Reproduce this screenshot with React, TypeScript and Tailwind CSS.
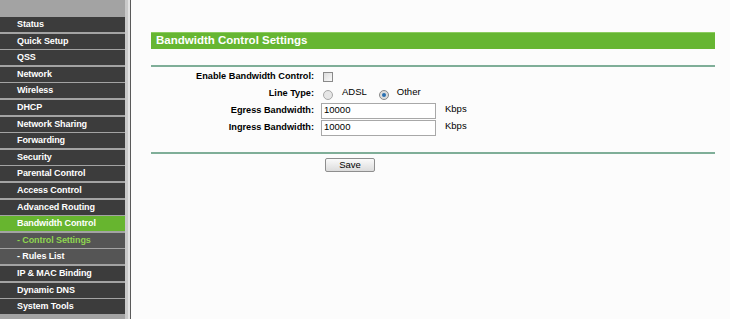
import React from "react";

const items: { label: string; kind?: "active" | "sub" | "subActive" }[] = [
  { label: "Status" },
  { label: "Quick Setup" },
  { label: "QSS" },
  { label: "Network" },
  { label: "Wireless" },
  { label: "DHCP" },
  { label: "Network Sharing" },
  { label: "Forwarding" },
  { label: "Security" },
  { label: "Parental Control" },
  { label: "Access Control" },
  { label: "Advanced Routing" },
  { label: "Bandwidth Control", kind: "active" },
  { label: "- Control Settings", kind: "subActive" },
  { label: "- Rules List", kind: "sub" },
  { label: "IP & MAC Binding" },
  { label: "Dynamic DNS" },
  { label: "System Tools" },
];

function MenuItem({ label, kind }: { label: string; kind?: string }) {
  let cls = "bg-[#3c3c3c] text-white";
  if (kind === "active") cls = "bg-[#67b52f] text-white";
  if (kind === "sub") cls = "bg-[#555555] text-white";
  if (kind === "subActive") cls = "bg-[#555555] text-[#8fd650]";
  return (
    <div className={`h-[15px] flex items-center pl-[17px] font-bold text-[9px] tracking-[-0.1px] leading-none ${cls}`}>
      {label}
    </div>
  );
}

function Row({ label, children }: { label: string; children: React.ReactNode }) {
  return (
    <div className="flex items-center h-[17px]">
      <div className="w-[163px] text-right font-bold text-[9.2px]">{label}</div>
      {children}
    </div>
  );
}

export default function App() {
  return (
    <div
      className="w-[730px] h-[319px] flex bg-[#fcfcfc] overflow-hidden"
      style={{ fontFamily: '"Liberation Sans", Arial, sans-serif' }}
    >
      <div className="w-[125px] bg-[#a3a3a3] flex flex-col pt-[17px] gap-[1.6px]">
        {items.map((it) => (
          <MenuItem key={it.label} label={it.label} kind={it.kind} />
        ))}
      </div>
      <div className="w-[3px] bg-[#c9c9c9]" />
      <div className="w-[2px] bg-[#e2e2e2]" />
      <div className="w-px bg-[#5a5a5a]" />
      <div className="flex-1 pl-[20px] pt-[32px] pr-[15px] flex flex-col">
        <div className="h-[17px] bg-[#66b632] border-t border-[#8ccc60] flex items-center pl-[5px] text-white font-bold text-[11.5px]">
          Bandwidth Control Settings
        </div>
        <div className="mt-[16px] h-[2px] bg-[#7fae98]" />
        <div className="mt-[1px] flex flex-col text-[9.5px] text-black">
          <Row label="Enable Bandwidth Control:">
            <div className="pl-[9px] flex items-center">
              <div className="w-[10px] h-[10px] border border-[#8a8a8a] bg-gradient-to-br from-[#dcdcdc] to-[#fafafa]" />
            </div>
          </Row>
          <Row label="Line Type:">
            <div className="pl-[9px] flex items-center">
              <div className="w-[10px] h-[10px] rounded-full border border-[#a8a8a8] bg-[#e6e6e6] mt-[3px]" />
              <span className="ml-[9px] -mt-[2px]">ADSL</span>
              <div className="ml-[12px] w-[10px] h-[10px] rounded-full border border-[#8a8a8a] bg-[#dcdcdc] mt-[3px] flex items-center justify-center">
                <div className="w-[4px] h-[4px] rounded-full bg-[#2a6fb0]" />
              </div>
              <span className="ml-[8px] -mt-[2px]">Other</span>
            </div>
          </Row>
          <Row label="Egress Bandwidth:">
            <div className="pl-[7px] flex items-center">
              <div className="w-[115px] h-[16px] border border-[#a8a8a8] bg-white pl-[2px] flex items-center text-[9.5px]">10000</div>
              <span className="ml-[9px] -mt-[2px]">Kbps</span>
            </div>
          </Row>
          <Row label="Ingress Bandwidth:">
            <div className="pl-[7px] flex items-center">
              <div className="w-[115px] h-[16px] border border-[#a8a8a8] bg-white pl-[2px] flex items-center text-[9.5px]">10000</div>
              <span className="ml-[9px] -mt-[2px]">Kbps</span>
            </div>
          </Row>
        </div>
        <div className="mt-[16px] h-[2px] bg-[#7fae98]" />
        <div className="mt-[4px] pl-[174px]">
          <div className="w-[50px] h-[14px] border border-[#8e8e8e] rounded-[2px] bg-gradient-to-b from-[#fafafa] to-[#dcdcdc] flex items-center justify-center text-[9.5px] text-black">
            Save
          </div>
        </div>
      </div>
    </div>
  );
}
